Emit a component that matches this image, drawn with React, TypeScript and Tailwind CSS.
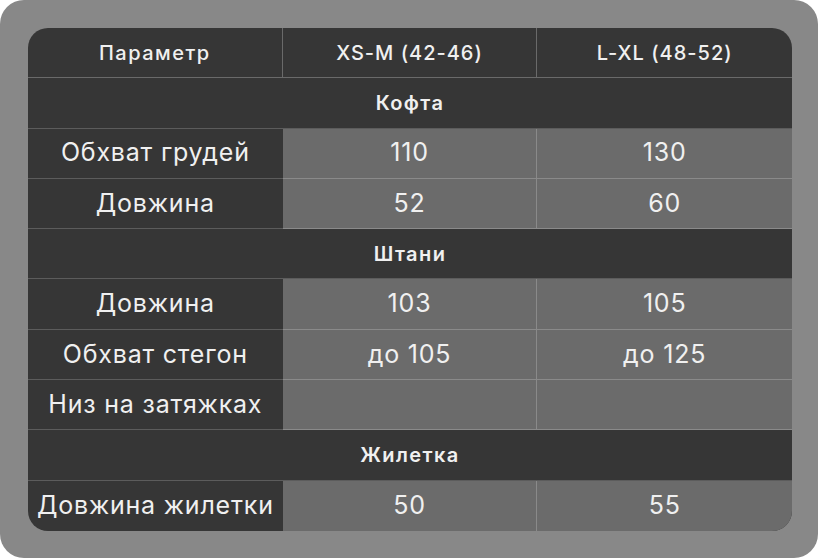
const font = { fontFamily: 'Inter, "Open Sans", sans-serif' };

type Row =
  | { kind: 'section'; title: string }
  | { kind: 'data'; label: string; a: string; b: string };

const rows: Row[] = [
  { kind: 'section', title: 'Кофта' },
  { kind: 'data', label: 'Обхват грудей', a: '110', b: '130' },
  { kind: 'data', label: 'Довжина', a: '52', b: '60' },
  { kind: 'section', title: 'Штани' },
  { kind: 'data', label: 'Довжина', a: '103', b: '105' },
  { kind: 'data', label: 'Обхват стегон', a: 'до 105', b: 'до 125' },
  { kind: 'data', label: 'Низ на затяжках', a: '', b: '' },
  { kind: 'section', title: 'Жилетка' },
  { kind: 'data', label: 'Довжина жилетки', a: '50', b: '55' },
];

export default function App() {
  return (
    <div className="w-[820px] h-[560px] bg-white">
      <div className="w-[818px] h-[558px] bg-[#888888] rounded-[24px] p-[28px] pr-[26px] pb-[27px]">
        <div
          className="w-[764px] h-[503px] rounded-[20px] overflow-hidden bg-[#363636] grid grid-cols-3 grid-rows-10 text-[#f0f0f0]"
          style={font}
        >
          <div className="flex items-center justify-center text-[20px] font-medium tracking-[1.5px] border-b border-r border-[#6a6a6a]">
            Параметр
          </div>
          <div className="flex items-center justify-center text-[20px] font-medium tracking-[1px] border-b border-r border-[#6a6a6a]">
            XS-M (42-46)
          </div>
          <div className="flex items-center justify-center text-[20px] font-medium tracking-[1px] border-b border-[#6a6a6a]">
            L-XL (48-52)
          </div>
          {rows.map((r, i) => {
            const last = i === rows.length - 1;
            const bb = last ? '' : 'border-b';
            if (r.kind === 'section') {
              return (
                <div
                  key={i}
                  className={`col-span-3 flex items-center justify-center text-[20px] font-semibold tracking-[1.4px] border-[#5c5c5c] ${bb}`}
                >
                  {r.title}
                </div>
              );
            }
            return (
              <div key={i} className="contents">
                <div className={`flex items-center justify-center text-[25px] tracking-[0.8px] border-[#5c5c5c] ${bb}`}>
                  {r.label}
                </div>
                <div className={`flex items-center justify-center text-[25px] tracking-[0.8px] bg-[#6b6b6b] border-r border-[#8a8a8a] ${bb}`}>
                  {r.a}
                </div>
                <div className={`flex items-center justify-center text-[25px] tracking-[0.8px] bg-[#6b6b6b] border-[#8a8a8a] ${bb}`}>
                  {r.b}
                </div>
              </div>
            );
          })}
        </div>
      </div>
    </div>
  );
}
